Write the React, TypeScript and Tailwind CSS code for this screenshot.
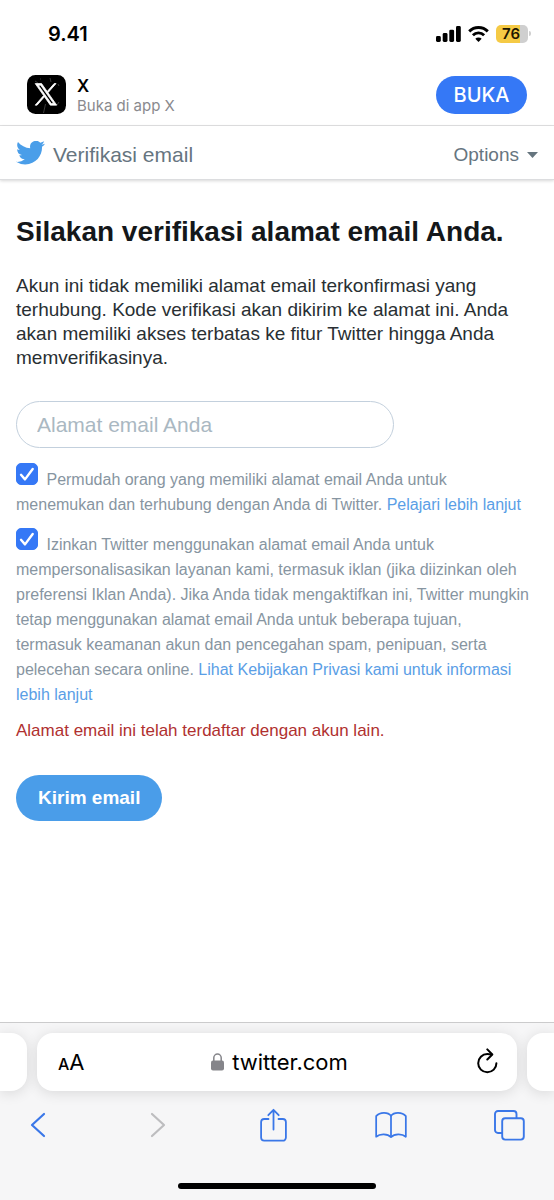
import React, { useState } from 'react';

interface ConsentProps {
  id: string;
  checked: boolean;
  onChange: (value: boolean) => void;
  children: React.ReactNode;
  link: string;
}

const StatusBar: React.FC = () => (
  <div className="flex h-16 items-center justify-between pl-12 pr-[23px] pt-[3px] font-['Inter',sans-serif]">
    <span className="text-xl font-semibold leading-6">9.41</span>
    <div className="flex items-center gap-[7px]">
      <svg width="25" height="16" viewBox="0 0 25 16" fill="#000">
        <rect x="0" y="10" width="4.8" height="6" rx="1.4" />
        <rect x="6.7" y="7" width="4.8" height="9" rx="1.4" />
        <rect x="13.3" y="3.7" width="4.8" height="12.3" rx="1.4" />
        <rect x="20" y="0" width="4.8" height="16" rx="1.4" />
      </svg>
      <svg width="21" height="16" viewBox="0 0 21 16" fill="none" stroke="#000" strokeWidth="2.9">
        <path d="M1.2 5.4a13.2 13.2 0 0 1 18.6 0" />
        <path d="M4.9 9.2a8 8 0 0 1 11.2 0" />
        <path d="M10.5 15.9 7.3 12.7a4.6 4.6 0 0 1 6.4 0Z" fill="#000" stroke="none" />
      </svg>
      <div className="flex items-center gap-px">
        <span className="flex h-[18px] w-8 items-center justify-center rounded-[5px] bg-linear-to-r from-[#f5ca45] from-76% to-[#cfcfcf] to-76% pr-[2px] text-[15px] font-semibold leading-none text-[#1c1600]">76</span>
        <span className="h-[5px] w-[2px] rounded-r-full bg-[#cfcfcf]" />
      </div>
    </div>
  </div>
);

const AppBanner: React.FC = () => (
  <div className="flex h-[62px] items-center justify-between border-b border-[#e2e2e3] px-[27px] font-['Inter',sans-serif]">
    <div className="flex items-center gap-[11px]">
      <svg width="39" height="39" viewBox="0 0 39 39">
        <rect width="39" height="39" rx="8.5" fill="#000" />
        <path d="M23 3l1 4M16.5 38l2-9M30 30l2-3M8 6l3 2M31 9l1 2M26 12l3-4M13 4l1 0" stroke="#555" strokeWidth=".7" />
        <path
          transform="translate(7.2 7.6) scale(.98)"
          fill="#fff"
          stroke="#fff"
          strokeWidth=".8"
          d="M14.095 10.316 22.286 1h-1.94L13.23 9.088 7.551 1H1l8.59 12.231L1 23h1.94l7.51-8.543L16.45 23H23l-8.905-12.684ZM4.14 2.732h2.5l13.227 18.6h-2.481L4.14 2.732Z"
        />
      </svg>
      <div className="pt-[2px]">
        <p className="text-[17px] font-semibold leading-5">X</p>
        <p className="text-[15px] leading-5 text-[#8a8a8e]">Buka di app X</p>
      </div>
    </div>
    <button type="button" className="h-[38px] w-[91px] rounded-full bg-[#3578f6] text-xl font-medium text-white">
      BUKA
    </button>
  </div>
);

const Consent: React.FC<ConsentProps> = ({ id, checked, onChange, children, link }) => (
  <p className="pr-2 text-base leading-[25px] text-[#8795a1]">
    <span className="relative mr-1 inline-block size-[22px]">
      <input
        id={id}
        type="checkbox"
        checked={checked}
        onChange={(e) => onChange(e.target.checked)}
        className="peer block size-[22px] appearance-none rounded-[5px] border border-[#c4cdd5] checked:border-[#3578f6] checked:bg-[#3578f6]"
      />
      <svg className="pointer-events-none absolute inset-0 hidden peer-checked:block" width="22" height="22" viewBox="0 0 22 22" fill="none" stroke="#fff" strokeWidth="2.4" strokeLinecap="round" strokeLinejoin="round">
        <path d="m5 11.8 4 4.6L16.7 6" />
      </svg>
    </span>{' '}
    <label htmlFor={id}>{children}</label>{' '}
    <a href="#" className="text-[#5a9ee6]">{link}</a>
  </p>
);

const BrowserBar: React.FC = () => (
  <footer className="border-t border-[#cbcbcc] bg-[#f6f6f7] font-['Inter',sans-serif]">
    <div className="flex gap-[10px] pt-[10px]">
      <div className="h-[58px] w-[27px] rounded-r-2xl bg-white shadow-[0_2px_14px_rgba(0,0,0,0.12)]" />
      <div className="flex h-[58px] flex-1 items-center justify-between rounded-2xl bg-white pl-[21px] pr-[19px] shadow-[0_2px_14px_rgba(0,0,0,0.12)]">
        <button type="button" aria-label="Tampilan halaman" className="w-7 pt-[2px] text-left leading-7">
          <span className="text-base font-medium">A</span>
          <span className="text-[22px]">A</span>
        </button>
        <div className="flex items-center gap-2">
          <svg width="13" height="18" viewBox="0 0 13 18">
            <rect x="0" y="7.5" width="13" height="10" rx="2" fill="#85858a" />
            <path d="M2.8 8V4.8a3.7 3.7 0 0 1 7.4 0V8" fill="none" stroke="#85858a" strokeWidth="1.5" />
          </svg>
          <span className="text-[22px] leading-7">twitter.com</span>
        </div>
        <button type="button" aria-label="Muat ulang" className="pb-[2px] pl-1">
          <svg width="21" height="26" viewBox="0 0 21 26" fill="none" stroke="#000" strokeWidth="2" strokeLinecap="round" strokeLinejoin="round">
            <path d="M19.4 15.2A9.1 9.1 0 1 1 10.3 6.1c1.6 0 3 .2 4.4.5" />
            <path d="m10.3 1.4 5 5.1-5 5" />
          </svg>
        </button>
      </div>
      <div className="h-[58px] w-[27px] rounded-l-2xl bg-white shadow-[0_2px_14px_rgba(0,0,0,0.12)]" />
    </div>

    <nav className="flex h-[68px] items-center justify-between pl-[22px] pr-[29px] text-[#3a77e8]">
      <button type="button" aria-label="Kembali" className="flex w-8 justify-center">
        <svg width="16" height="26" viewBox="0 0 16 26" fill="none" stroke="currentColor" strokeWidth="2.2" strokeLinecap="round" strokeLinejoin="round">
          <path d="M14 2 2 13l12 11" />
        </svg>
      </button>
      <button type="button" aria-label="Maju" disabled className="flex w-8 justify-center pl-1 text-[#bdbdbf]">
        <svg width="16" height="26" viewBox="0 0 16 26" fill="none" stroke="currentColor" strokeWidth="2.2" strokeLinecap="round" strokeLinejoin="round">
          <path d="m2 2 12 11L2 24" />
        </svg>
      </button>
      <button type="button" aria-label="Bagikan" className="flex w-8 justify-center">
        <svg width="27" height="34" viewBox="0 0 27 34" fill="none" stroke="currentColor" strokeWidth="1.8" strokeLinecap="round" strokeLinejoin="round">
          <path d="M8.5 11H4.2A3.1 3.1 0 0 0 1.1 14v15.6a3.1 3.1 0 0 0 3.1 3.1h18.6a3.1 3.1 0 0 0 3.1-3.1V14a3.1 3.1 0 0 0-3.1-3h-4.3" />
          <path d="M13.5 21.5V2M8.3 7.2l5.2-5.4 5.2 5.4" />
        </svg>
      </button>
      <button type="button" aria-label="Bookmark" className="flex w-8 justify-center">
        <svg width="32" height="28" viewBox="0 0 33 28" fill="none" stroke="currentColor" strokeWidth="1.8" strokeLinejoin="round">
          <path d="M16.5 4.6C13.6.3 5 .3 1.2 4.8v21.3c4-3.6 11.8-3.3 15.3.4 3.5-3.7 11.3-4 15.3-.4V4.8C28 .3 19.4.3 16.5 4.6Z" />
          <path d="M16.5 4.6v21.9" />
        </svg>
      </button>
      <button type="button" aria-label="Tab" className="flex w-8 justify-center">
        <svg width="31" height="31" viewBox="0 0 31 31" fill="none" stroke="currentColor" strokeWidth="1.9" strokeLinejoin="round">
          <path d="M8 23H4a3 3 0 0 1-3-3V4a3 3 0 0 1 3-3h15.5a3 3 0 0 1 3 3v4" />
          <rect x="8.2" y="8.2" width="21.6" height="21.4" rx="3" />
        </svg>
      </button>
    </nav>

    <div className="flex h-[41px] items-end justify-center pb-[11px]">
      <div className="h-[6px] w-[198px] rounded-full bg-black" />
    </div>
  </footer>
);

export default function App() {
  const [email, setEmail] = useState('');
  const [discoverable, setDiscoverable] = useState(true);
  const [personalized, setPersonalized] = useState(true);

  return (
    <div className="flex min-h-screen flex-col bg-white font-['Liberation_Sans',Arial,sans-serif] text-black">
      <StatusBar />
      <AppBanner />

      <header className="flex h-[54px] items-center justify-between border-b border-[#dcdddf] px-4 text-[#66757f] shadow-[0_1px_3px_rgba(0,0,0,0.16)]">
        <div className="flex items-center gap-2">
          <svg width="29" height="24" viewBox="0 2.5 24 19.5" fill="#4a9ee9">
            <path d="M23.954 4.569a10 10 0 0 1-2.825.775 4.958 4.958 0 0 0 2.163-2.723c-.951.555-2.005.959-3.127 1.184a4.92 4.92 0 0 0-8.384 4.482C7.691 8.094 4.066 6.13 1.64 3.161a4.822 4.822 0 0 0-.666 2.475c0 1.71.87 3.213 2.188 4.096a4.904 4.904 0 0 1-2.228-.616v.061a4.923 4.923 0 0 0 3.946 4.827 4.996 4.996 0 0 1-2.212.085 4.937 4.937 0 0 0 4.604 3.417 9.868 9.868 0 0 1-6.102 2.105c-.39 0-.779-.023-1.17-.067a13.995 13.995 0 0 0 7.557 2.209c9.054 0 13.999-7.496 13.999-13.986 0-.209 0-.42-.015-.63a9.936 9.936 0 0 0 2.46-2.548l-.047-.02z" />
          </svg>
          <h2 className="pt-1 text-[21px] leading-6">Verifikasi email</h2>
        </div>
        <button type="button" className="flex items-center gap-2 pt-1 text-[19px] leading-6">
          Options
          <svg width="11" height="6" viewBox="0 0 11 6" fill="currentColor">
            <path d="M0 0h11L5.5 6z" />
          </svg>
        </button>
      </header>

      <main className="flex-1 px-4 pt-8">
        <h1 className="text-[28px] font-bold leading-10 text-[#14171a]">Silakan verifikasi alamat email Anda.</h1>
        <p className="mt-[22px] text-[19px] leading-6 text-[#292f33]">
          Akun ini tidak memiliki alamat email terkonfirmasi yang terhubung. Kode verifikasi akan dikirim ke alamat ini. Anda akan memiliki akses terbatas ke fitur Twitter hingga Anda memverifikasinya.
        </p>

        <form onSubmit={(e) => e.preventDefault()}>
          <input
            type="email"
            aria-label="Alamat email Anda"
            placeholder="Alamat email Anda"
            value={email}
            onChange={(e) => setEmail(e.target.value)}
            className="mt-[31px] block h-[47px] w-full max-w-[378px] rounded-full border border-[#c3d0dd] px-5 text-[21px] outline-none placeholder:text-[#aab8c2]"
          />

          <div className="mt-[15px] flex flex-col gap-[11px]">
            <Consent id="discoverable" checked={discoverable} onChange={setDiscoverable} link="Pelajari lebih lanjut">
              Permudah orang yang memiliki alamat email Anda untuk menemukan dan terhubung dengan Anda di Twitter.
            </Consent>
            <Consent id="personalized" checked={personalized} onChange={setPersonalized} link="Lihat Kebijakan Privasi kami untuk informasi lebih lanjut">
              Izinkan Twitter menggunakan alamat email Anda untuk mempersonalisasikan layanan kami, termasuk iklan (jika diizinkan oleh preferensi Iklan Anda). Jika Anda tidak mengaktifkan ini, Twitter mungkin tetap menggunakan alamat email Anda untuk beberapa tujuan, termasuk keamanan akun dan pencegahan spam, penipuan, serta pelecehan secara online.
            </Consent>
          </div>

          <p className="mt-3 text-[17px] leading-6 text-[#b0302f]">Alamat email ini telah terdaftar dengan akun lain.</p>

          <button type="submit" className="mt-8 h-[46px] rounded-full bg-[#4a9de9] px-[22px] text-[19px] font-bold text-white">
            Kirim email
          </button>
        </form>
      </main>

      <BrowserBar />
    </div>
  );
}
